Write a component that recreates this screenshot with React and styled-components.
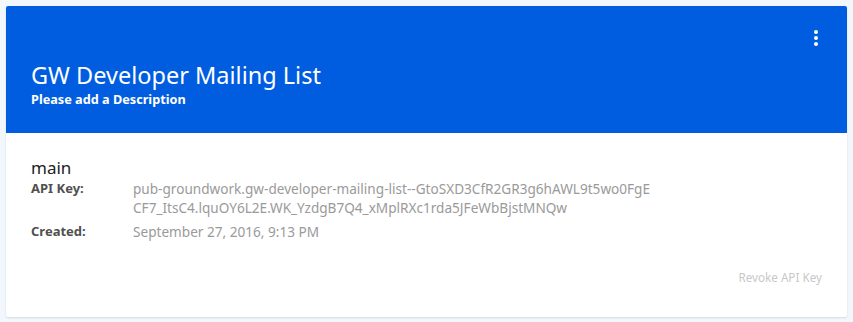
import React from 'react'
import styled, { createGlobalStyle } from 'styled-components'

const GlobalStyle = createGlobalStyle`
  html, body {
    margin: 0;
    background: #f2f6fd;
    font-family: "Noto Sans", "Open Sans", sans-serif;
  }
`

const Page = styled.div`
  padding: 6px;
`

const Card = styled.div`
  background: #fff;
  border-radius: 2px;
  box-shadow: 0 1px 2px rgba(0, 0, 0, 0.12);
  overflow: hidden;
`

const Header = styled.div`
  position: relative;
  background: #005ddf;
  color: #fff;
  height: 127px;
  padding: 0 25px 26px;
  box-sizing: border-box;
  display: flex;
  flex-direction: column;
  justify-content: flex-end;
`

const Title = styled.h1`
  margin: 0 0 1px;
  font-size: 23.5px;
  font-weight: 400;
  line-height: 29px;
`

const Subtitle = styled.div`
  font-size: 12.7px;
  font-weight: 700;
  line-height: 16px;
`

const MenuButton = styled.button`
  position: absolute;
  top: 24px;
  right: 29px;
  border: 0;
  background: none;
  padding: 0;
  display: flex;
  flex-direction: column;
  gap: 2px;
  cursor: pointer;

  span {
    width: 4px;
    height: 4px;
    border-radius: 50%;
    background: #fff;
  }
`

const Body = styled.div`
  padding: 24px 25px 32px;
`

const KeyName = styled.div`
  font-size: 17px;
  line-height: 22px;
  color: #222;
`

const Row = styled.div`
  display: grid;
  grid-template-columns: 102px 1fr;
  font-size: 13.6px;
  line-height: 19px;
  margin-bottom: ${p => p.gap || 0}px;
`

const Label = styled.div`
  font-weight: 700;
  font-size: 13px;
  color: #505050;
`

const Value = styled.div`
  color: #9a9a9a;
`

const Footer = styled.div`
  display: flex;
  justify-content: flex-end;
  margin-top: 28px;
`

const Revoke = styled.button`
  border: 0;
  background: none;
  padding: 0;
  font-family: inherit;
  font-size: 11.7px;
  color: #c8c8c8;
  cursor: pointer;
`

const App = () => (
  <Page>
    <GlobalStyle />
    <Card>
      <Header>
        <MenuButton aria-label="menu">
          <span />
          <span />
          <span />
        </MenuButton>
        <Title>GW Developer Mailing List</Title>
        <Subtitle>Please add a Description</Subtitle>
      </Header>
      <Body>
        <KeyName>main</KeyName>
        <Row gap={5}>
          <Label>API Key:</Label>
          <Value>
            pub-groundwork.gw-developer-mailing-list--GtoSXD3CfR2GR3g6hAWL9t5wo0FgE
            <br />
            CF7_ItsC4.lquOY6L2E.WK_YzdgB7Q4_xMplRXc1rda5JFeWbBjstMNQw
          </Value>
        </Row>
        <Row>
          <Label>Created:</Label>
          <Value>September 27, 2016, 9:13 PM</Value>
        </Row>
        <Footer>
          <Revoke>Revoke API Key</Revoke>
        </Footer>
      </Body>
    </Card>
  </Page>
)

export default App
